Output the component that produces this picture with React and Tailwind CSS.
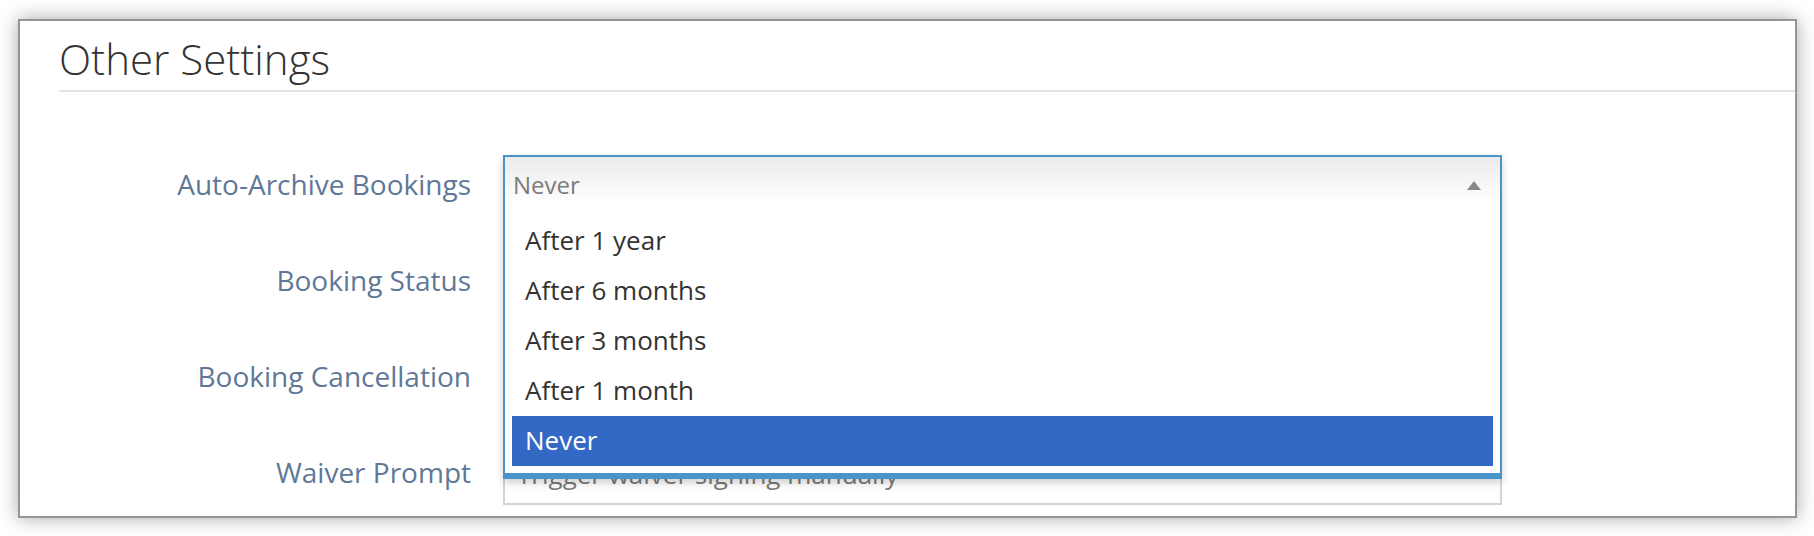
const options = ['After 1 year', 'After 6 months', 'After 3 months', 'After 1 month', 'Never']

const rows = [
  { label: 'Auto-Archive Bookings', open: true },
  { label: 'Booking Status' },
  { label: 'Booking Cancellation' },
  { label: 'Waiver Prompt', value: 'Trigger waiver signing manually' },
]

function Dropdown() {
  return (
    <div className="absolute -left-[2px] -top-[2px] z-10 w-[999px] border-2 border-b-[6px] border-[#4894cb] bg-white shadow-[0_4px_8px_rgba(0,0,0,0.18)]">
      {/* current value */}
      <div className="flex h-[59px] items-center justify-between bg-linear-to-b from-[#ebebeb] to-white to-80% pb-[3px] pl-[8px] pr-[19px]">
        <span className="text-[24px] leading-none text-[#7b7b7b]">Never</span>
        <svg width="14" height="9" viewBox="0 0 14 9">
          <polygon points="7,0 14,9 0,9" fill="#888" />
        </svg>
      </div>
      <ul className="px-[7px] pb-[7px]">
        {options.map((opt) => (
          <li
            key={opt}
            className={`flex h-[50px] items-center pb-[3px] pl-[13px] text-[26px] leading-none ${
              opt === 'Never' ? 'bg-[#3369c4] text-white' : 'text-[#333]'
            }`}
          >
            {opt}
          </li>
        ))}
      </ul>
    </div>
  )
}

export default function App() {
  return (
    <div className="h-[536px] w-[1814px] bg-white pl-[18px] pt-[19px] font-['Open_Sans',sans-serif]">
      <div className="h-[499px] w-[1779px] overflow-hidden border-2 border-[#959595] bg-white shadow-[0_0_18px_rgba(0,0,0,0.35)]">

        {/* Heading */}
        <div className="pl-[39px] pt-[14px]">
          <h1 className="text-[42px] font-light leading-[48px] text-[#333]">Other Settings</h1>
          <div className="mt-[7px] h-[2px] bg-[#e3e3e3]" />
        </div>

        {/* Form */}
        <div className="mt-[63px] flex flex-col gap-[34px]">
          {rows.map(({ label, value, open }) => (
            <div key={label} className="flex h-[62px] items-center">
              <label className="w-[451px] pb-[4px] text-right text-[28px] leading-none text-[#5f7898]">
                {label}
              </label>
              <div className="relative ml-[32px] flex h-[62px] w-[999px] items-center border-2 border-[#d4d4d4] pl-[12px]">
                {value && <span className="text-[26px] leading-none text-[#7b7b7b]">{value}</span>}
                {open && <Dropdown />}
              </div>
            </div>
          ))}
        </div>
      </div>
    </div>
  )
}
